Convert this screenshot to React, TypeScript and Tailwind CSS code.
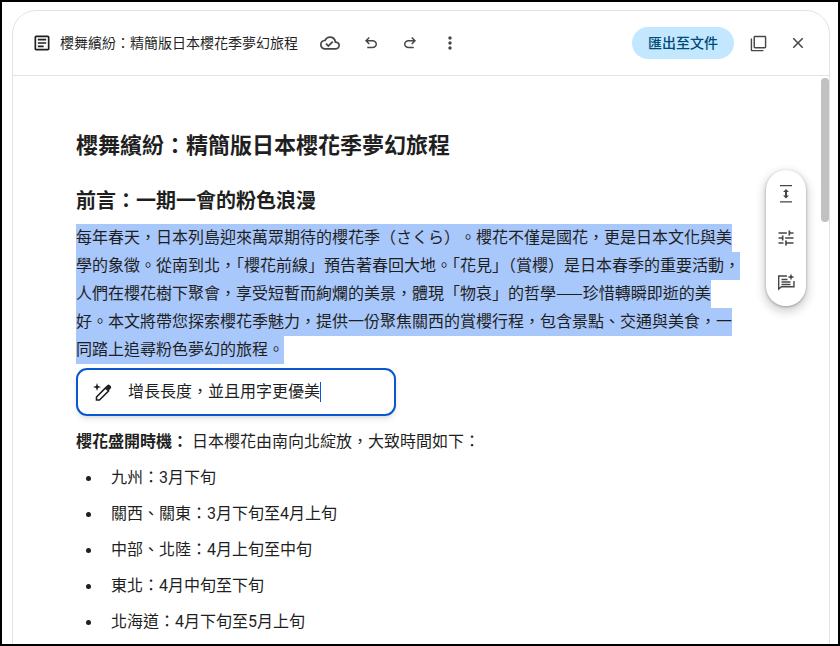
import { MdOutlineArticle, MdOutlineCloudDone, MdMoreVert, MdFilterNone, MdClose, MdTune } from "react-icons/md";

const intro = [
  <>每年春天，日本列島迎來萬眾期待的櫻花季（さくら<span className="[text-spacing-trim:space-all]">）。</span>櫻花不僅是國花，更是日本文化與美</>,
  <>學的象徵。從南到北，「櫻花前線」預告著春回大地。「花見」（賞櫻）是日本春季的重要活動，</>,
  <>人們在櫻花樹下聚會，享受短暫而絢爛的美景，體現「物哀」的哲學<span className="font-['Noto_Sans_CJK_TC'] leading-[16px]">——</span>珍惜轉瞬即逝的美</>,
  <>好。本文將帶您探索櫻花季魅力，提供一份聚焦關西的賞櫻行程，包含景點、交通與美食，一</>,
  <>同踏上追尋粉色夢幻的旅程。</>,
];

const bloom = [
  "九州：3月下旬",
  "關西、關東：3月下旬至4月上旬",
  "中部、北陸：4月上旬至中旬",
  "東北：4月中旬至下旬",
  "北海道：4月下旬至5月上旬",
];

const UndoIcon = () => (
  <svg width="18" height="18" viewBox="0 -960 960 960" fill="currentColor">
    <path d="M280-200v-80h284q63 0 109.500-40T720-420q0-60-46.500-100T564-560H312l104 104-56 56-200-200 200-200 56 56-104 104h252q97 0 166.500 63T800-420q0 94-69.500 157T564-200H280Z" />
  </svg>
);

const RedoIcon = () => (
  <svg width="18" height="18" viewBox="0 -960 960 960" fill="currentColor">
    <path d="M396-200q-97 0-166.500-63T160-420q0-94 69.500-157T396-640h252L544-744l56-56 200 200-200 200-56-56 104-104H396q-63 0-109.500 40T240-420q0 60 46.500 100T396-280h284v80H396Z" />
  </svg>
);

const ExpandIcon = () => (
  <svg width="20" height="20" viewBox="0 0 20 20" fill="currentColor">
    <path d="M4 1h12v1.300H4zM4 17.300h12v1.300H4z" />
    <path d="M10 5l3 3h-2v3.600h2l-3 3-3-3h2V8H7z" />
  </svg>
);

const NoteSparkIcon = () => (
  <svg width="20" height="20" viewBox="0 0 20 20" fill="none" stroke="currentColor" strokeWidth="1.4">
    <path d="M11 4H2.700v13l2.800-2.300H18V9" />
    <path d="M5.500 7.500h6M5.500 10h9M5.500 12.500h9" />
    <path d="M15 1.500l.9 2.600 2.600.9-2.600.9-.9 2.600-.9-2.600-2.600-.9 2.600-.9z" fill="currentColor" stroke="none" />
  </svg>
);

const WandIcon = () => (
  <svg width="20" height="20" viewBox="0 0 20 20" fill="none" stroke="currentColor" strokeWidth="1.6">
    <path d="M4.500 18v-3L13.500 6l3 3-9 9z" />
    <path d="M14.500 5l1.300-1.300c.4-.4 1-.4 1.400 0l.9.900c.4.400.4 1 0 1.400L16.800 7.300z" fill="currentColor" />
    <path d="M5 1l1 3 3 1-3 1-1 3-1-3-3-1 3-1z" fill="currentColor" stroke="none" />
  </svg>
);

export default function App() {
  return (
    <div className="h-[646px] w-[840px] overflow-hidden border-2 border-black bg-white pl-[10px] pr-[8px] pt-[8px] font-['Roboto','Noto_Sans_CJK_TC',sans-serif] text-[#1f1f1f]">
      <div className="relative h-[700px] rounded-t-[24px] border border-[#e3e3e3] bg-white">
        <header className="flex h-[65px] items-center border-b border-[#e3e3e3] pl-[19px] pr-[22px]">
          <MdOutlineArticle className="h-[20px] w-[20px]" />
          <span className="ml-[8px] text-sm">櫻舞繽紛：精簡版日本櫻花季夢幻旅程</span>
          <MdOutlineCloudDone className="ml-[22px] h-[20px] w-[20px] text-[#444746]" />
          <div className="ml-[22px] text-[#444746]"><UndoIcon /></div>
          <div className="ml-[21px] text-[#444746]"><RedoIcon /></div>
          <MdMoreVert className="ml-[21px] h-[20px] w-[20px] text-[#444746]" />
          <button className="ml-auto h-[32px] rounded-full bg-[#c2e7ff] px-4 text-sm font-medium text-[#004a77]">匯出至文件</button>
          <MdFilterNone className="ml-[16px] h-[17px] w-[17px] text-[#444746]" />
          <MdClose className="ml-[22px] h-[18px] w-[18px] text-[#444746]" />
        </header>

        <main className="pl-[63px] pr-[80px] pt-[53px]">
          <h1 className="text-[22px] font-bold leading-[34px]">櫻舞繽紛：精簡版日本櫻花季夢幻旅程</h1>
          <h2 className="mt-[24px] text-xl font-bold leading-[28px]">前言：一期一會的粉色浪漫</h2>
          <div className="mt-[9px]">
            {intro.map((line, i) => (
              <div key={i} className="h-[28px] w-fit whitespace-nowrap bg-[#a8c7fa] leading-[28px]">{line}</div>
            ))}
          </div>
          <div className="mt-[4px] flex h-[48px] w-[320px] items-center rounded-[11px] border-2 border-[#0b57d0] pl-[14px] shadow-md">
            <WandIcon />
            <span className="ml-[16px]">增長長度，並且用字更優美</span>
            <span className="h-[20px] w-px bg-[#0b57d0]" />
          </div>
          <p className="mt-[12px] leading-[28px]">
            <b>櫻花盛開時機：</b> 日本櫻花由南向北綻放，大致時間如下：
          </p>
          <ul className="mt-[4px]">
            {bloom.map((item) => (
              <li key={item} className="flex h-[36px] items-center">
                <span className="ml-[10px] mr-[20px] h-[5px] w-[5px] rounded-full bg-[#1f1f1f]" />
                {item}
              </li>
            ))}
          </ul>
        </main>

        <div className="absolute right-[23px] top-[159px] flex h-[136px] w-[40px] flex-col items-center gap-6 rounded-full bg-white pt-[14px] text-[#444746] shadow-[0_1px_3px_rgba(0,0,0,0.3),0_4px_8px_3px_rgba(0,0,0,0.15)]">
          <ExpandIcon />
          <MdTune className="h-[20px] w-[20px]" />
          <NoteSparkIcon />
        </div>

        <div className="absolute right-0 top-[67px] h-[144px] w-[8px] rounded-full bg-[#c1c1c1]" />
      </div>
    </div>
  );
}
